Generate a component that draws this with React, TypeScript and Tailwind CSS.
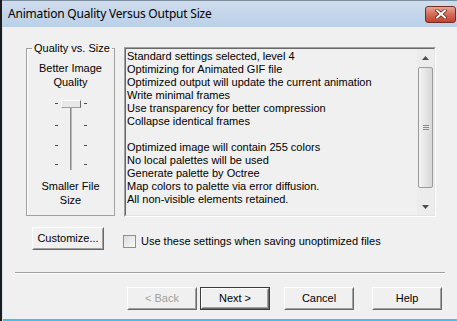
import React from "react";

const infoTop = [
  "Standard settings selected, level 4",
  "Optimizing for Animated GIF file",
  "Optimized output will update the current animation",
  "Write minimal frames",
  "Use transparency for better compression",
  "Collapse identical frames",
];

const infoBottom = [
  "Optimized image will contain 255 colors",
  "No local palettes will be used",
  "Generate palette by Octree",
  "Map colors to palette via error diffusion.",
  "All non-visible elements retained.",
];

function Btn({ label, w = "w-[70px]", disabled, isDefault }: { label: string; w?: string; disabled?: boolean; isDefault?: boolean }) {
  const face = (
    <span className="flex h-full w-full border border-t-white border-l-white border-r-[#696969] border-b-[#696969]">
      <span className={`flex h-full w-full items-center justify-center border border-t-[#f0f0f0] border-l-[#f0f0f0] border-r-[#a0a0a0] border-b-[#a0a0a0] ${disabled ? "text-[#a0a0a0]" : "text-black"}`}>
        {label}
      </span>
    </span>
  );
  return (
    <button className={`${w} h-[23px] bg-[#f0f0f0] ${isDefault ? "border border-[#3c3c3c]" : ""}`} disabled={disabled}>
      {face}
    </button>
  );
}

function Slider() {
  const ticks = [3, 25, 45, 64];
  return (
    <div className="relative mx-auto mt-[11px] h-[70px] w-[32px]">
      {ticks.map((t) => (
        <div key={"l" + t} className="absolute left-0 h-[1px] w-[3px] bg-[#4a4a4a]" style={{ top: t }} />
      ))}
      {ticks.map((t) => (
        <div key={"r" + t} className="absolute right-0 h-[1px] w-[3px] bg-[#4a4a4a]" style={{ top: t }} />
      ))}
      <div className="absolute left-[15px] top-[4px] h-[66px] w-[2px] border-l border-[#8a8a8a] bg-[#b8b8b8]" />
      <div className="absolute left-[6px] top-0 h-[8px] w-[20px] border border-t-white border-l-white border-r-[#696969] border-b-[#a0a0a0] bg-[#e8e8e8]" />
    </div>
  );
}

function Scrollbar() {
  return (
    <div className="flex h-full w-[17px] flex-col bg-[#ececec]">
      <div className="flex h-[17px] items-center justify-center">
        <svg width="7" height="4" viewBox="0 0 7 4"><path d="M0 4 L3.5 0 L7 4 Z" fill="#4d4d4d" /></svg>
      </div>
      <div className="mx-[1px] mt-[1px] flex h-[121px] items-center justify-center rounded-[2px] border border-[#9b9b9b] bg-linear-to-r from-[#f3f3f3] to-[#d8d8d8]">
        <div className="flex flex-col gap-[1px]">
          <div className="h-[1px] w-[6px] bg-[#8a8a8a]" />
          <div className="h-[1px] w-[6px] bg-[#8a8a8a]" />
          <div className="h-[1px] w-[6px] bg-[#8a8a8a]" />
        </div>
      </div>
      <div className="mt-auto flex h-[17px] items-center justify-center">
        <svg width="7" height="4" viewBox="0 0 7 4"><path d="M0 0 L3.5 4 L7 0 Z" fill="#4d4d4d" /></svg>
      </div>
    </div>
  );
}

export default function App() {
  return (
    <div className="flex h-[321px] w-[457px] flex-col overflow-hidden border-l-2 border-[#1c1c1c] bg-[#f0f0f0] font-['Liberation_Sans',Arial,sans-serif] text-[11px] leading-[13px] text-black">
      {/* title bar */}
      <div className="flex h-[27px] shrink-0 items-center border-t border-[#7d8fa3] bg-linear-to-b from-[#cfdcec] to-[#b9d0ea] pl-[6px]">
        <span className="font-['Noto_Sans',sans-serif] text-[12px] leading-[16px] tracking-[-0.2px] text-black">Animation Quality Versus Output Size</span>
        <div className="ml-auto mr-[1px] flex h-[17px] w-[31px] items-center justify-center rounded-[3px] border border-[#7a2a1e] bg-linear-to-b from-[#e8a696] via-[#d36a56] to-[#c0432e]">
          <svg width="12" height="10" viewBox="0 0 12 10">
            <path d="M2 1.5 L10 8.5 M10 1.5 L2 8.5" stroke="#5a1a10" strokeWidth="3.4" strokeLinecap="square" />
            <path d="M2 1.5 L10 8.5 M10 1.5 L2 8.5" stroke="#ffffff" strokeWidth="2" strokeLinecap="square" />
          </svg>
        </div>
      </div>

      {/* client area */}
      <div className="flex flex-1 flex-col border-l border-[#d6e2ee]">
        <div className="flex items-start pl-[23px] pt-[15px]">
          <fieldset className="h-[174px] w-[89px] border border-[#a0a0a0] shadow-[inset_1px_1px_0_#ffffff]">
            <legend className="ml-[5px] px-[2px] leading-[13px]">Quality vs. Size</legend>
            <div className="pt-[6px] text-center leading-[14px]">
              <div>Better Image</div>
              <div>Quality</div>
            </div>
            <Slider />
            <div className="mt-[9px] text-center leading-[14px]">
              <div>Smaller File</div>
              <div>Size</div>
            </div>
          </fieldset>

          <div className="ml-[9px] mt-[5px] h-[170px] w-[312px] border border-t-[#a0a0a0] border-l-[#a0a0a0] border-r-white border-b-white">
            <div className="flex h-full border border-t-[#696969] border-l-[#696969] border-r-[#e3e3e3] border-b-[#e3e3e3]">
              <div className="flex-1 pl-[1px] pt-[1px]">
                {infoTop.map((l) => (
                  <div key={l} className="h-[13px] whitespace-nowrap">{l}</div>
                ))}
                <div className="h-[13px]" />
                {infoBottom.map((l) => (
                  <div key={l} className="h-[13px] whitespace-nowrap">{l}</div>
                ))}
              </div>
              <Scrollbar />
            </div>
          </div>
        </div>

        <div className="mt-[10px] flex items-center pl-[29px]">
          <Btn label="Customize..." w="w-[72px]" />
          <div className="ml-[19px] mt-[5px] h-[13px] w-[13px] border border-[#8f8f8f] bg-linear-to-br from-[#dcdcdc] to-[#f8f8f8]" />
          <span className="ml-[5px] mt-[5px]">Use these settings when saving unoptimized files</span>
        </div>

        <div className="ml-[12px] mt-[22px] h-[2px] w-[430px] border-t border-[#a0a0a0] border-b border-b-white" />

        <div className="ml-[124px] mt-[13px] flex">
          <Btn label="< Back" disabled />
          <div className="ml-[3px]">
            <Btn label="Next >" isDefault />
          </div>
          <div className="ml-[14px]">
            <Btn label="Cancel" />
          </div>
          <div className="ml-[18px]">
            <Btn label="Help" />
          </div>
        </div>

        <div className="mt-auto h-[2px] bg-[#3fc1e9]" />
      </div>
    </div>
  );
}
